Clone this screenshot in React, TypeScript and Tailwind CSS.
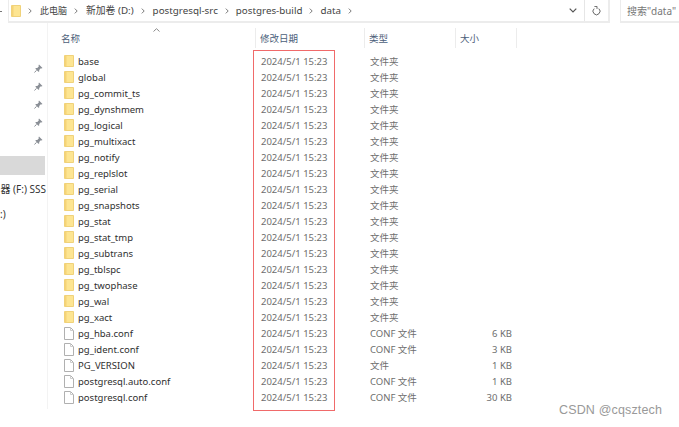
const font = { fontFamily: '"Noto Sans", "Noto Sans CJK SC", sans-serif' };

const folders = ['base','global','pg_commit_ts','pg_dynshmem','pg_logical','pg_multixact','pg_notify','pg_replslot','pg_serial','pg_snapshots','pg_stat','pg_stat_tmp','pg_subtrans','pg_tblspc','pg_twophase','pg_wal','pg_xact'];
const files = [
  ['pg_hba.conf','CONF 文件','6 KB'],
  ['pg_ident.conf','CONF 文件','3 KB'],
  ['PG_VERSION','文件','1 KB'],
  ['postgresql.auto.conf','CONF 文件','1 KB'],
  ['postgresql.conf','CONF 文件','30 KB'],
];
const rows = [
  ...folders.map((n) => ({ name: n, type: '文件夹', size: '', folder: true })),
  ...files.map(([name, type, size]) => ({ name, type, size, folder: false })),
];

function Folder({ w = 10, h = 12 }: { w?: number; h?: number }) {
  return (
    <svg width={w} height={h} viewBox="0 0 10 12" className="shrink-0">
      <path d="M0.5 0.5H9.5V11.5H0.5Z" fill="#fde592" stroke="#f0d27a" strokeWidth="1" />
      <rect x="1" y="1" width="1.5" height="10" fill="#f6d376" />
    </svg>
  );
}

function FileIcon() {
  return (
    <svg width="10" height="13" viewBox="0 0 10 13" className="shrink-0">
      <path d="M0.5 0.5H6.5L9.5 3.5V12.5H0.5Z" fill="#ffffff" stroke="#b0b0b0" strokeWidth="1" />
      <path d="M6.5 0.5V3.5H9.5" fill="none" stroke="#cccccc" strokeWidth="1" />
    </svg>
  );
}

function Chevron() {
  return (
    <svg width="4" height="6" viewBox="0 0 4 6" className="shrink-0 mx-[7px]">
      <path d="M0.8 0.6L3.2 3L0.8 5.4" fill="none" stroke="#7a7a7a" strokeWidth="1" />
    </svg>
  );
}

function Pin() {
  return (
    <svg width="9" height="9" viewBox="0 0 9 9">
      <path d="M5 0.5L8.5 4L7.5 4.6L6.8 4.3L5.2 5.9L5.2 7.4L4.4 7.8L1.4 4.8L1.8 4L3.3 4L4.9 2.3L4.5 1.4Z" fill="#8a8f96" />
      <path d="M2.5 6.3L0.5 8.5" stroke="#8a8f96" strokeWidth="1" />
    </svg>
  );
}

export default function App() {
  return (
    <div className="relative w-[679px] h-[427px] overflow-hidden bg-white text-[9.5px] leading-[16px] text-[#333]" style={font}>
      {/* top bar */}
      <div className="flex h-[23px] items-stretch">
        <div className="flex w-[8px] items-center"><div className="h-px w-[2px] bg-[#777]" /></div>
        <div className="flex w-[602px] items-center border-b-2 border-l border-r-2 border-[#ececec] pl-[2px] text-[9.8px] text-[#444]">
          <Folder w={10} h={12} />
          <Chevron />
          <span className="ml-[1px] text-[9px]">此电脑</span>
          <Chevron />
          <span className="ml-[1px]">新加卷 (D:)</span>
          <Chevron />
          <span className="ml-[1px]">postgresql-src</span>
          <Chevron />
          <span>postgres-build</span>
          <Chevron />
          <span>data</span>
          <Chevron />
          <div className="flex-1" />
          <svg width="8" height="5" viewBox="0 0 8 5" className="mr-[7px]"><path d="M0.7 0.7L4 4L7.3 0.7" fill="none" stroke="#555" strokeWidth="1.2" /></svg>
          <div className="flex h-full w-[24px] items-center justify-center border-l border-[#e6e6e6]">
            <svg width="9" height="10" viewBox="0 0 9 10"><path d="M6.8 2.6A3.5 3.5 0 1 1 2.2 2.6" fill="none" stroke="#666" strokeWidth="1" /><path d="M2.4 0.4H5V2.9" fill="none" stroke="#666" strokeWidth="1" /></svg>
          </div>
        </div>
        <div className="ml-[10px] flex flex-1 items-center border-b-2 border-l border-[#ececec] pl-[6px] text-[10px] text-[#777]">搜索"data"</div>
      </div>

      <div className="flex">
        {/* navigation pane */}
        <div className="h-[386px] w-[48px] shrink-0 border-r border-[#f3f3f3] pr-[1px] pt-[41px] text-[10px] text-[#333]">
          <div className="flex flex-col items-end gap-[9px] pr-[3px]">
            <Pin /><Pin /><Pin /><Pin /><Pin />
          </div>
          <div className="mt-[11px] mr-[1px] h-[19px] bg-[#d9d9d9]" />
          <div className="mt-[6px] flex h-[16px] items-center justify-end whitespace-nowrap">器 (F:) SSS</div>
          <div className="mt-[9px] h-[16px] overflow-hidden">:)</div>
        </div>

        {/* file list */}
        <div className="relative flex-1">
          <div className="relative flex h-[30px] items-start pt-[5px] text-[#4c607a]">
            <svg width="7" height="4" viewBox="0 0 7 4" className="absolute left-[105px] top-[5px]"><path d="M0.5 3.5L3.5 0.7L6.5 3.5" fill="none" stroke="#8a8a8a" strokeWidth="1" /></svg>
            <div className="h-[20px] w-[208px] pl-[13px] leading-[22px] border-r border-[#ececec]">名称</div>
            <div className="h-[20px] w-[109px] pl-[4px] leading-[22px] border-r border-[#ececec]">修改日期</div>
            <div className="h-[20px] w-[91px] pl-[4px] leading-[22px] border-r border-[#ececec]">类型</div>
            <div className="h-[20px] w-[61px] pl-[4px] leading-[22px] border-r border-[#ececec]">大小</div>
          </div>

          <div className="relative">
            {rows.map((r) => (
              <div key={r.name} className="flex h-[16px] items-start leading-[18px]">
                <div className="flex w-[208px] items-start gap-[4px] pl-[16px] text-[#2f2f2f]">
                  <div className="mt-[2px] shrink-0">{r.folder ? <Folder /> : <FileIcon />}</div>
                  <span>{r.name}</span>
                </div>
                <div className="w-[109px] pl-[5px] text-[#6e6e6e]">2024/5/1 15:23</div>
                <div className="w-[91px] pl-[5px] text-[#6e6e6e]">{r.type}</div>
                <div className="w-[56px] text-right text-[#6e6e6e]">{r.size}</div>
              </div>
            ))}
            <div className="absolute left-[205px] top-[-3px] h-[361px] w-[82px] border border-[#f06a6a]" />
          </div>
        </div>
      </div>

      <div className="absolute left-[559px] top-[402px] text-[12.5px] leading-[16px] tracking-[0.15px] text-[#999]" style={{ fontFamily: '"Liberation Sans", sans-serif' }}>CSDN @cqsztech</div>
    </div>
  );
}
